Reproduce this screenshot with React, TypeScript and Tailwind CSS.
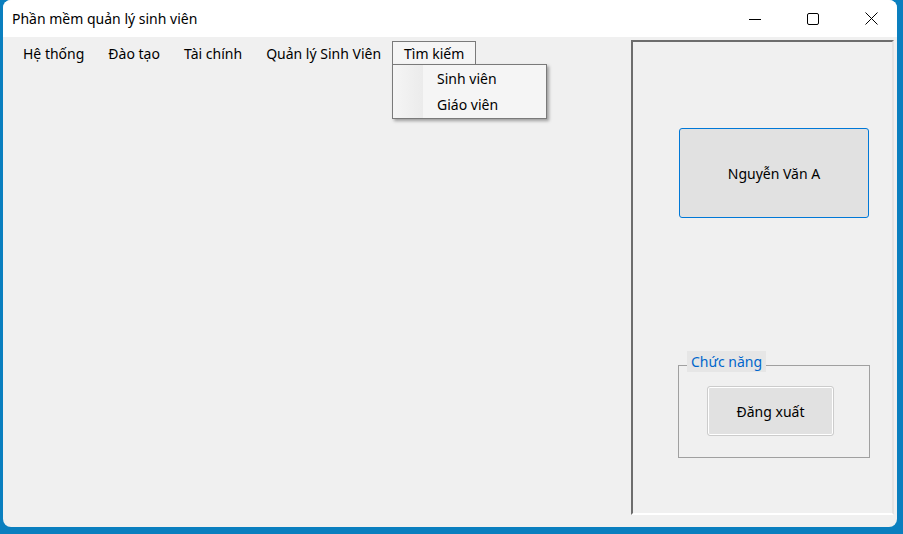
import React from "react";

const font = { fontFamily: '"Noto Sans", "Liberation Sans", sans-serif' };

function MenuItem({ label, active = false }: { label: string; active?: boolean }) {
  return (
    <div
      className={
        active
          ? "relative flex h-[24px] items-center border border-[#7a7a7a] border-b-0 bg-[#f5f5f5] px-[11px]"
          : "flex h-[24px] items-center border border-transparent px-[11px]"
      }
    >
      {label}
    </div>
  );
}

export default function App() {
  return (
    <div
      className="flex h-[534px] w-[903px] bg-[#0a7fbf] pb-[7px] pl-[3px] pr-[6px] text-[#000000]"
      style={font}
    >
      <div className="flex min-w-0 flex-1 flex-col overflow-hidden rounded-[8px] bg-[#f0f0f0]">
        {/* title bar */}
        <div className="flex h-[37px] shrink-0 items-center bg-white">
          <span className="pl-[9px] text-[14px]">Phần mềm quản lý sinh viên</span>
          <div className="ml-auto flex h-full items-center">
            <div className="flex h-full w-[46px] items-center justify-center">
              <svg width="12" height="12" viewBox="0 0 12 12">
                <path d="M0 6.5h12" stroke="#000" strokeWidth="1" />
              </svg>
            </div>
            <div className="ml-[12px] flex h-full w-[46px] items-center justify-center">
              <svg width="12" height="12" viewBox="0 0 12 12">
                <rect x="0.5" y="0.5" width="11" height="11" rx="1.5" fill="none" stroke="#000" strokeWidth="1" />
              </svg>
            </div>
            <div className="ml-[12px] mr-[3px] flex h-full w-[46px] items-center justify-center">
              <svg width="13" height="13" viewBox="0 0 13 13">
                <path d="M0.5 0.5l12 12M12.5 0.5l-12 12" stroke="#000" strokeWidth="1" />
              </svg>
            </div>
          </div>
        </div>

        {/* body */}
        <div className="flex min-h-0 flex-1">
          <div className="flex w-[628px] flex-col">
            <div className="flex items-center pl-[8px] pt-[4px] text-[14px]">
              <MenuItem label="Hệ thống" />
              <MenuItem label="Đào tạo" />
              <MenuItem label="Tài chính" />
              <MenuItem label="Quản lý Sinh Viên" />
              <div className="relative -ml-[1px]">
                <MenuItem label="Tìm kiếm" active />
                <div className="absolute left-0 top-[23px] z-10 flex h-[55px] w-[155px] border border-[#7a7a7a] bg-[#f5f5f5] shadow-[2px_2px_3px_rgba(0,0,0,0.35)]">
                  <div className="w-[30px] bg-gradient-to-r from-[#f5f5f5] to-[#ebebeb]" />
                  <div className="flex flex-1 flex-col pl-[14px]">
                    <div className="flex h-[26px] items-center">Sinh viên</div>
                    <div className="flex h-[26px] items-center">Giáo viên</div>
                  </div>
                </div>
              </div>
            </div>
          </div>

          {/* right panel */}
          <div className="mb-[12px] mr-[3px] mt-[3px] flex flex-1 flex-col border-2 border-b-white border-l-[#6d6d6d] border-r-[#e3e3e3] border-t-[#6d6d6d] pt-[86px] text-[14px]">
            <div className="ml-[46px] flex h-[90px] w-[190px] items-center justify-center rounded-[3px] border border-[#0078d7] bg-[#e1e1e1]">
              Nguyễn Văn A
            </div>

            <div className="relative ml-[45px] mt-[147px] h-[93px] w-[192px] border border-[#a0a0a0]">
              <span className="absolute left-[8px] top-[-15px] bg-[#e6e6e6] px-[4px] text-[#0066cc]">
                Chức năng
              </span>
              <div className="ml-[28px] mt-[20px] flex h-[50px] w-[127px] items-center justify-center rounded-[3px] border border-[#cccccc] bg-[#e1e1e1] shadow-[inset_0_0_0_1px_#ffffff]">
                Đăng xuất
              </div>
            </div>
          </div>
        </div>
      </div>
    </div>
  );
}
